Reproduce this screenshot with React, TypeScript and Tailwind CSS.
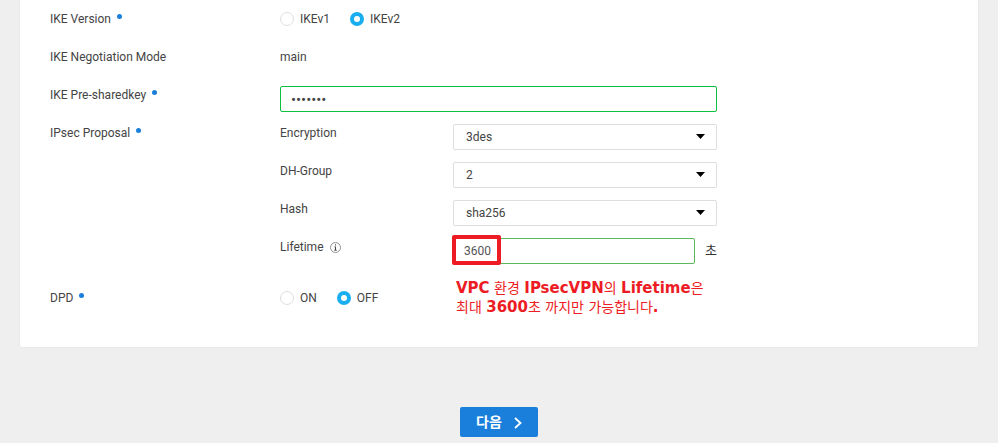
import React, { useState } from "react";

const LATIN = "font-['Roboto','Noto_Sans_CJK_KR',sans-serif]";

function RequiredDot() {
  return <span aria-hidden="true" className="mt-1 ml-1.5 size-[5px] shrink-0 rounded-full bg-[#1a7fdb]" />;
}

function Label({ text, htmlFor, required }: { text: string; htmlFor?: string; required?: boolean }) {
  return (
    <div className="flex w-[230px] shrink-0 items-start">
      {htmlFor ? <label htmlFor={htmlFor}>{text}</label> : <span>{text}</span>}
      {required && <RequiredDot />}
    </div>
  );
}

function Radio({ name, label, checked, onChange }: { name: string; label: string; checked: boolean; onChange: () => void }) {
  return (
    <label className="flex items-center gap-1.5">
      <input
        type="radio"
        name={name}
        checked={checked}
        onChange={onChange}
        className="size-3.5 appearance-none rounded-full border border-[#dedede] bg-white checked:border-4 checked:border-[#18aef0]"
      />
      {label}
    </label>
  );
}

function RadioRow({ title, name, options, initial }: { title: string; name: string; options: string[]; initial: string }) {
  const [value, setValue] = useState(initial);
  return (
    <div className="flex" role="radiogroup" aria-label={title}>
      <Label text={title} required />
      <div className="flex gap-5">
        {options.map((o) => (
          <Radio key={o} name={name} label={o} checked={value === o} onChange={() => setValue(o)} />
        ))}
      </div>
    </div>
  );
}

function SelectRow({ id, label, options }: { id: string; label: string; options: string[] }) {
  return (
    <div className="flex">
      <label htmlFor={id} className="w-[173px] shrink-0">
        {label}
      </label>
      <div className="relative flex-1">
        <select
          id={id}
          className="block h-[26px] w-full appearance-none rounded-xs border border-[#dedede] bg-white px-3 text-[#444]"
        >
          {options.map((o) => (
            <option key={o}>{o}</option>
          ))}
        </select>
        <svg viewBox="0 0 9 5" className="pointer-events-none absolute top-2.5 right-3 h-[5px] w-[9px]" aria-hidden="true">
          <path d="M0 0h9L4.5 5z" fill="#000" />
        </svg>
      </div>
    </div>
  );
}

export default function App() {
  return (
    <main className={`min-h-screen bg-[#efefef] px-5 text-xs leading-[18px] text-[#444] ${LATIN}`}>
      <form onSubmit={(e) => e.preventDefault()}>
        <section className="rounded-b-xs bg-white px-[30px] pt-2.5 pb-10 shadow-[0_0_1px_1px_#e9e9e9]">
          <div className="flex w-full max-w-[667px] flex-col gap-5">
            <RadioRow title="IKE Version" name="ike" options={["IKEv1", "IKEv2"]} initial="IKEv2" />
            <div className="flex">
              <Label text="IKE Negotiation Mode" />
              <span>main</span>
            </div>
            <div className="flex h-[18px]">
              <Label text="IKE Pre-sharedkey" htmlFor="psk" required />
              <input
                id="psk"
                type="password"
                defaultValue="1234567"
                className="h-[26px] min-w-0 flex-1 rounded-xs border border-solid border-[#0fbf3f] bg-white px-2.5 pt-0.5 text-[15px] text-[#444]"
              />
            </div>
            <div className="flex">
              <Label text="IPsec Proposal" required />
              <div className="flex flex-1 flex-col gap-3">
                <SelectRow id="enc" label="Encryption" options={["3des", "aes128", "aes256"]} />
                <SelectRow id="dh" label="DH-Group" options={["2", "5", "14"]} />
                <SelectRow id="hash" label="Hash" options={["sha256", "sha1", "md5"]} />
                <div className="flex">
                  <div className="flex w-[173px] shrink-0 items-start gap-1.5">
                    <label htmlFor="life">Lifetime</label>
                    <svg viewBox="0 0 11 11" className="mt-1 size-[11px]" fill="none" aria-hidden="true">
                      <circle cx="5.5" cy="5.5" r="5" stroke="#777" strokeWidth="0.8" />
                      <path d="M5.5 2.3v1.2M4.5 4.8h1v3.4M4.3 8.2h2.4" stroke="#444" strokeWidth="1" />
                    </svg>
                  </div>
                  <div className="relative flex flex-1 items-center gap-2.5">
                    <input
                      id="life"
                      type="text"
                      defaultValue="3600"
                      className="h-[26px] min-w-0 flex-1 rounded-xs border border-solid border-[#5cb85c] bg-white px-2.5 text-[#555]"
                    />
                    <span className="text-[13px] text-[#333]">초</span>
                    <span aria-hidden="true" className="absolute -top-[3px] -left-px h-[30px] w-[49px] rounded-xs border-4 border-[#ed1c24]" />
                    <p className="absolute top-[41px] left-[3px] font-['DejaVu_Sans','Noto_Sans_CJK_KR',sans-serif] text-sm leading-[19px] whitespace-nowrap text-[#ed1c24] [&_b]:text-[15px]">
                      <b>VPC</b> 환경 <b>IPsecVPN</b>의 <b>Lifetime</b>은
                      <br />
                      최대 <b>3600</b>초 까지만 가능합니다<b>.</b>
                    </p>
                  </div>
                </div>
              </div>
            </div>
            <div className="pt-[5px]">
              <RadioRow title="DPD" name="dpd" options={["ON", "OFF"]} initial="OFF" />
            </div>
          </div>
        </section>
        <div className="flex justify-center pt-[60px] pb-1.5">
          <button
            type="submit"
            className="flex h-[30px] items-center gap-3 rounded-xs bg-[#1a7fdb] px-4 text-sm font-bold text-white"
          >
            다음
            <svg viewBox="0 0 8 12" className="mt-0.5 h-3 w-2" fill="none" aria-hidden="true">
              <path d="M1 1l5.5 5L1 11" stroke="#fff" strokeWidth="1.8" />
            </svg>
          </button>
        </div>
      </form>
    </main>
  );
}
